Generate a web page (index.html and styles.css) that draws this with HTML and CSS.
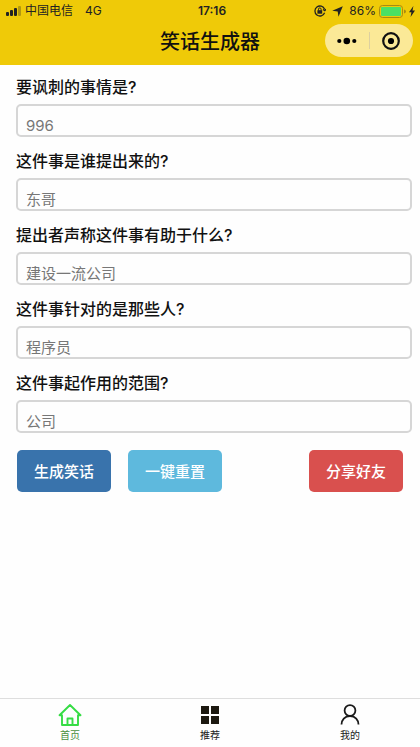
FILE: index.html
```html
<!DOCTYPE html>
<html lang="zh-CN">
<head>
<meta charset="utf-8">
<meta name="viewport" content="width=device-width, initial-scale=1">
<title>笑话生成器</title>
<link rel="stylesheet" href="styles.css">
</head>
<body>
<header class="top">
  <div class="status">
    <div class="status-left">
      <svg class="signal" width="17" height="10" viewBox="0 0 17 10" aria-hidden="true">
        <rect x="1" y="6" width="3" height="4" rx="1"/><rect x="5" y="4" width="3" height="6" rx="1"/><rect x="9" y="2" width="3" height="8" rx="1"/><rect x="13" y="0" width="3" height="10" rx="1" opacity=".3"/>
      </svg>
      <span>中国电信</span>
      <span class="network">4G</span>
    </div>
    <time class="clock">17:16</time>
    <div class="status-right">
      <svg width="12" height="12" viewBox="0 0 12 12" aria-hidden="true">
        <path d="M10.600 4.200A5 5 0 1 0 10.600 7.800M9 4.500l1.800 1.200L12 4" fill="none" stroke="#222" stroke-width="1.300"/>
        <rect x="3.400" y="5.200" width="4.800" height="3.500"/><path d="M4.500 5.500V4.200a1.300 1.300 0 0 1 2.600 0v1.300" fill="none" stroke="#222"/>
      </svg>
      <svg class="arrow" width="11" height="11" viewBox="0 0 11 11" aria-hidden="true"><path d="M10.800.2 6.500 10.800 5.700 5.500.2 4.700z"/></svg>
      <span class="percent">86%</span>
      <svg width="27" height="13" viewBox="0 0 27 13" aria-hidden="true">
        <rect x=".5" y=".5" width="23" height="12" rx="3" fill="none" stroke="#a88b12"/><rect x="2" y="2" width="20" height="9" rx="1" fill="#4be064"/><path d="M25 4.500q2 .4 2 2t-2 2z" fill="#a88b12"/>
      </svg>
      <svg class="bolt" width="6" height="11" viewBox="0 0 6 11" aria-hidden="true"><path d="M4.400 0 0 6.200h2.400L1.600 11 6 4.600H3.500z"/></svg>
    </div>
  </div>
  <div class="nav">
    <h1>笑话生成器</h1>
    <div class="capsule">
      <button type="button" aria-label="更多"><svg width="20" height="8" viewBox="0 0 20 8"><circle cx="2.300" cy="4" r="2.100"/><circle cx="9.800" cy="4" r="3.300"/><circle cx="17.300" cy="4" r="2.100"/></svg></button>
      <button type="button" aria-label="关闭"><svg width="18" height="18" viewBox="0 0 18 18"><circle cx="9" cy="9" r="7.800" fill="none" stroke="#111" stroke-width="2.200"/><circle cx="9" cy="9" r="3.100"/></svg></button>
    </div>
  </div>
</header>
<main>
  <form>
    <div class="field"><label for="what">要讽刺的事情是?</label><input id="what" type="text" placeholder="996"></div>
    <div class="field"><label for="who">这件事是谁提出来的?</label><input id="who" type="text" placeholder="东哥"></div>
    <div class="field"><label for="benefit">提出者声称这件事有助于什么?</label><input id="benefit" type="text" placeholder="建设一流公司"></div>
    <div class="field"><label for="target">这件事针对的是那些人?</label><input id="target" type="text" placeholder="程序员"></div>
    <div class="field"><label for="scope">这件事起作用的范围?</label><input id="scope" type="text" placeholder="公司"></div>
    <div class="actions">
      <button class="btn primary" type="button">生成笑话</button>
      <button class="btn info" type="button">一键重置</button>
      <button class="btn danger" type="button">分享好友</button>
    </div>
  </form>
</main>
<nav class="tabs">
  <a class="tab active" href="#home">
    <svg width="24" height="24" viewBox="0 0 24 24" fill="none" stroke="currentColor" stroke-width="1.900" stroke-linejoin="round" aria-hidden="true"><path d="M12 2 1.500 12.200H4V22h16V12.200h2.500zM9.500 22v-6.500h5V22"/></svg>
    <span>首页</span>
  </a>
  <a class="tab" href="#recommend">
    <svg width="24" height="24" viewBox="0 0 24 24" fill="#1c1910" aria-hidden="true"><path d="M3 3h8v8H3zM13 3h8v8h-8zM3 13h8v8H3zM13 13h8v8h-8z"/></svg>
    <span>推荐</span>
  </a>
  <a class="tab" href="#mine">
    <svg width="24" height="24" viewBox="0 0 24 24" fill="none" stroke="currentColor" stroke-width="1.800" aria-hidden="true"><circle cx="12" cy="7.500" r="5.400"/><path d="M3.500 21.500c0-4.500 3.200-8.500 8.500-8.500s8.500 4 8.500 8.500"/></svg>
    <span>我的</span>
  </a>
</nav>
</body>
</html>
```
FILE: styles.css
```css
* {
  box-sizing: border-box;
}

body {
  margin: 0;
  min-height: 100vh;
  display: flex;
  flex-direction: column;
  background: #fefefe;
  color: #111;
  font-family: Inter, "Noto Sans CJK SC", sans-serif;
}

button,
input {
  font-family: inherit;
}

.top {
  background: #efca08;
  padding-bottom: 8px;
}

.status {
  display: grid;
  grid-template-columns: 1fr auto 1fr;
  align-items: center;
  height: 22px;
  padding: 0 5px;
  font-size: 12px;
  line-height: 20px;
  color: #222;
}

.status svg {
  fill: #222;
}

.status-left,
.status-right {
  display: flex;
  align-items: center;
}

.signal {
  margin-right: 3px;
}

.network {
  margin-left: 12px;
}

.clock {
  padding-left: 4px;
  font-weight: 600;
}

.status-right {
  justify-content: flex-end;
}

.arrow {
  margin: 0 6px;
}

.percent {
  margin-right: 3px;
}

.bolt {
  margin-left: 3px;
}

.nav {
  display: grid;
  grid-template-columns: 1fr auto 1fr;
  align-items: center;
  padding: 2px 7px 0;
}

.nav h1 {
  grid-column: 2;
  margin: 0;
  padding-top: 3px;
  font-size: 20px;
  font-weight: 500;
  line-height: 30px;
}

.capsule {
  justify-self: end;
  display: flex;
  width: 88px;
  height: 33px;
  border-radius: 17px;
  background: #fbe997;
}

.capsule button {
  flex: 1;
  display: flex;
  align-items: center;
  justify-content: center;
  margin: 8px 0;
  padding: 0;
  border: 0;
  background: none;
}

.capsule button + button {
  border-left: 1px solid #ddd0a0;
}

main {
  flex: 1;
  padding: 10px 8px 0 16px;
}

.field {
  margin-bottom: 12px;
}

.field label {
  display: block;
  margin-bottom: 5px;
  font-size: 16px;
  font-weight: 500;
  line-height: 24px;
}

.field input {
  display: block;
  width: 100%;
  height: 33px;
  padding: 9px 8px 0;
  border: 2px solid #d6d6d6;
  border-radius: 5px;
  background: #fefefe;
  color: #777;
  font-size: 15px;
}

.field input::placeholder {
  color: #777;
  opacity: 1;
}

.actions {
  display: flex;
  gap: 17px;
  padding: 5px 9px 0 1px;
}

.btn {
  width: 94px;
  height: 42px;
  padding: 0 0 2px;
  border: 0;
  border-radius: 5px;
  color: #fff;
  font-size: 15px;
  font-weight: 500;
}

.primary {
  background: #3973ac;
}

.info {
  background: #5eb9dd;
}

.danger {
  margin-left: auto;
  background: #d9504e;
}

.tabs {
  display: flex;
  border-top: 1px solid #dedede;
  padding: 4px 0 3px;
}

.tab {
  flex: 1;
  display: flex;
  flex-direction: column;
  align-items: center;
  color: #1a1a1a;
  text-decoration: none;
  font-size: 10px;
  line-height: 17px;
}

.active {
  color: #36dc45;
}

.active span {
  color: #4a8f3d;
}
```
